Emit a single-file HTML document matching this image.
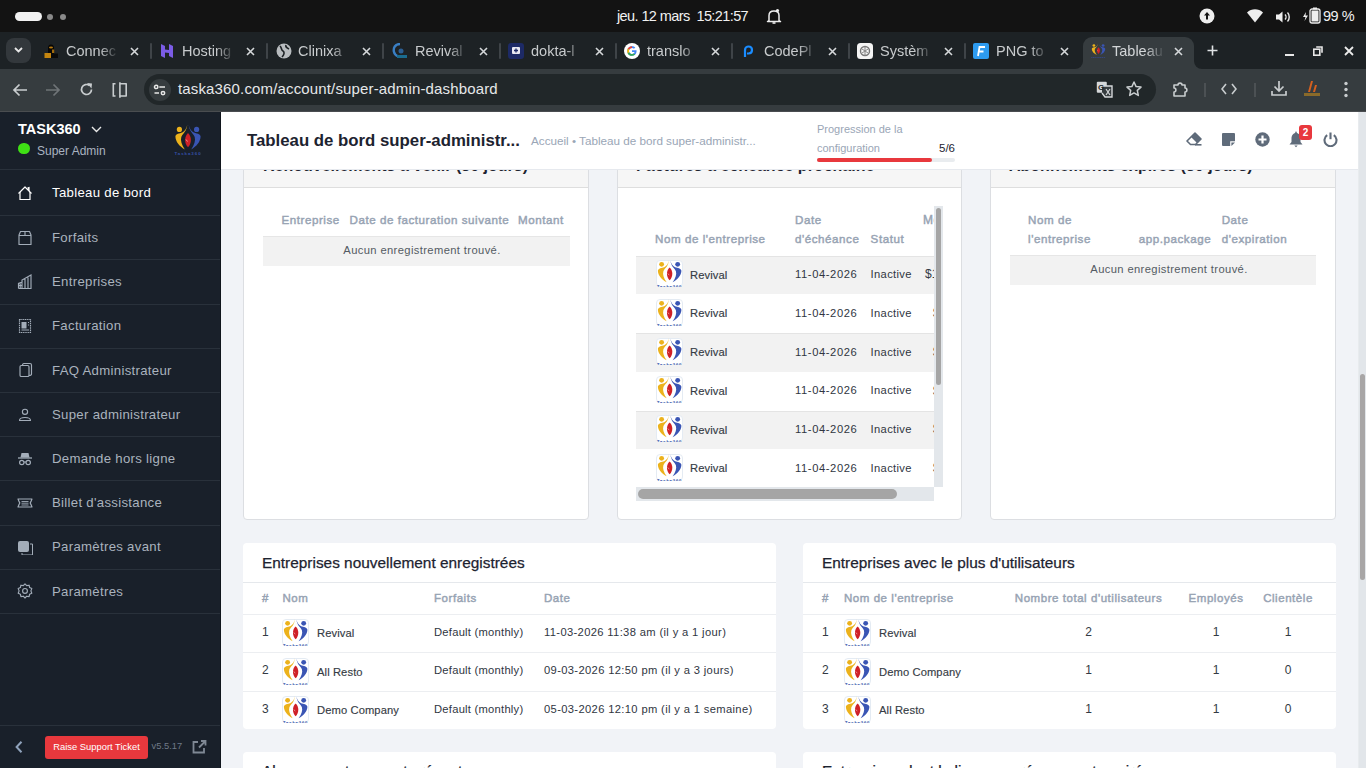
<!DOCTYPE html>
<html><head><meta charset="utf-8"><style>
*{box-sizing:border-box;margin:0;padding:0}
html,body{width:1366px;height:768px;overflow:hidden;background:#f1f3f7;font-family:"Liberation Sans",sans-serif}
.abs{position:absolute}
.nw{white-space:nowrap}
#os{position:absolute;left:0;top:0;width:1366px;height:32px;background:#131313;color:#f1f1f1}
#tabs{position:absolute;left:0;top:32px;width:1366px;height:37px;background:#1d2225}
#tool{position:absolute;left:0;top:69px;width:1366px;height:42px;background:#363c3f}
#sep{position:absolute;left:0;top:111px;width:1366px;height:1px;background:#4a4d50}
.tt{position:absolute;top:11px;font-size:14.5px;color:#c8cbcd;white-space:nowrap;overflow:hidden;width:53px;-webkit-mask-image:linear-gradient(to right,#000 34px,transparent 53px)}
.tsep{position:absolute;top:11px;width:2px;height:16px;background:#3f4448;border-radius:1px}
#side{position:absolute;left:0;top:112px;width:221px;height:656px;background:#19202a;border-right:1px solid #10151c}
.mi{position:absolute;left:0;width:220px;height:45px;border-bottom:1px solid #29313b}
.mi .tx{position:absolute;left:52px;top:15px;font-size:14px;color:#aab3be;white-space:nowrap}
.mi svg{position:absolute}
#hdr{position:absolute;left:221px;top:112px;width:1137px;height:58px;background:#fff;border-bottom:1px solid #e6e9ee}
.card{position:absolute;background:#fff;border:1px solid #dcdee2;border-radius:4px}
.card2{position:absolute;background:#fff;border-radius:4px}
.th{position:absolute;font-size:12px;font-weight:bold;color:#9aa6b6;white-space:nowrap}
.td{position:absolute;font-size:12px;color:#333a44;white-space:nowrap}
.empty{position:absolute;background:#f2f2f2;font-size:12px;color:#50565e;text-align:center;line-height:30px}
.logo{position:absolute;width:27px;height:26px;background:#fff;border:1px solid #e3e8ef;border-radius:4px;overflow:hidden}
.logo svg{position:absolute;left:1px;top:0}
#sb{position:absolute;left:1358px;top:112px;width:8px;height:656px;background:#e2e6ea;border-left:1px solid #e8ebee}
#sbt{position:absolute;left:1360px;top:374px;width:5px;height:206px;background:#a8a6a6;border-radius:2.5px}
</style></head><body>
<svg width="0" height="0" style="position:absolute"><defs>
<symbol id="lg" viewBox="0 0 36 36">
<circle cx="9.4" cy="8.4" r="2.6" fill="#ecb21c"/>
<path d="M17.4,3.8 C16.4,7.5 15,10.2 12.2,11.6 C9.6,12.6 5.8,12.6 5.4,15.6 C5.6,21 9.5,25.5 14.8,28.4 C11.6,23.5 10.3,19.5 11.3,16 C12.1,13.6 14.6,11.8 15.6,9.6 C16.4,8 17,6 17.4,3.8 Z" fill="#ecb21c"/>
<circle cx="26.6" cy="8.4" r="2.6" fill="#3a55b4"/>
<path d="M18.6,3.8 C19.6,7.5 21,10.2 23.8,11.6 C26.4,12.6 30.2,12.6 30.6,15.6 C30.4,21 26.5,25.5 21.2,28.4 C24.4,23.5 25.7,19.5 24.7,16 C23.9,13.6 21.4,11.8 20.4,9.6 C19.6,8 19,6 18.6,3.8 Z" fill="#3a55b4"/>
<path d="M18,12 C21.8,15.5 21.8,22.5 18,26.2 C14.2,22.5 14.2,15.5 18,12 Z" fill="#cf2027"/>
<path d="M16,18.5 L17.5,20.5" stroke="#f0b0b0" stroke-width="0.8"/>
<text x="18" y="34.3" text-anchor="middle" font-family="Liberation Sans" font-weight="bold" font-size="4.4" letter-spacing="0.95" fill="#3550a8">Taska360</text>
</symbol>
</defs></svg>
<div id="os">
<div class="abs" style="left:15px;top:12px;width:27px;height:9px;border-radius:5px;background:#f2f2f2"></div>
<div class="abs" style="left:47px;top:14px;width:6px;height:6px;border-radius:3px;background:#8a8a8a"></div>
<div class="abs" style="left:60px;top:14px;width:6px;height:6px;border-radius:3px;background:#8a8a8a"></div>
<div class="abs nw" style="left:617px;top:8px;font-size:14.5px;letter-spacing:-0.6px">jeu. 12 mars&nbsp; 15:21:57</div>
<svg class="abs" style="left:766px;top:8px" width="16" height="17" viewBox="0 0 16 17"><path d="M3,12.5 L3,7.5 C3,4.5 5,3 8,3 C11,3 13,4.5 13,7.5 L13,12.5 L14.5,13.5 L1.5,13.5 Z" fill="none" stroke="#eee" stroke-width="1.5" stroke-linejoin="round"/><path d="M6.5,15 L9.5,15" stroke="#eee" stroke-width="1.6"/><circle cx="11.5" cy="2.5" r="1.6" fill="#eee"/></svg>
<svg class="abs" style="left:1199px;top:8px" width="16" height="16" viewBox="0 0 16 16"><circle cx="8" cy="8" r="7.5" fill="#eee"/><path d="M8,4 L11,7.5 L9,7.5 L9,11.5 L7,11.5 L7,7.5 L5,7.5 Z" fill="#131313"/></svg>
<svg class="abs" style="left:1247px;top:9px" width="16" height="14" viewBox="0 0 16 14"><path d="M0,3.5 C4.5,-0.8 11.5,-0.8 16,3.5 L8,13.5 Z" fill="#eee"/></svg>
<svg class="abs" style="left:1276px;top:11px" width="15" height="12" viewBox="0 0 15 12"><path d="M0,3.5 L3,3.5 L6.5,0.5 L6.5,11.5 L3,8.5 L0,8.5 Z" fill="#eee"/><path d="M9,3.5 C10.3,4.8 10.3,7.2 9,8.5" fill="none" stroke="#eee" stroke-width="1.4"/><path d="M11.5,1.5 C13.8,3.8 13.8,8.2 11.5,10.5" fill="none" stroke="#eee" stroke-width="1.4"/></svg>
<svg class="abs" style="left:1302px;top:7px" width="19" height="17" viewBox="0 0 19 17"><path d="M4,5 L1,10 L3.5,10 L2.5,14 L6,8.5 L3.5,8.5 Z" fill="#eee"/><rect x="8" y="2" width="10" height="14" rx="2" fill="none" stroke="#eee" stroke-width="1.3"/><rect x="11" y="0.5" width="4" height="2" fill="#eee"/><rect x="9.5" y="3.5" width="7" height="11" fill="#eee"/></svg>
<div class="abs nw" style="left:1323px;top:8px;font-size:14.5px;letter-spacing:-0.5px">99 %</div>
</div>
<div id="tabs">
<div class="abs" style="left:6px;top:6px;width:25px;height:25px;border-radius:8px;background:#33383c"></div>
<svg class="abs" style="left:13px;top:14px" width="11" height="8" viewBox="0 0 11 8"><path d="M2,2 L5.5,5.5 L9,2" fill="none" stroke="#e8e8e8" stroke-width="1.8"/></svg>
<div class="abs" style="left:1083px;top:5px;width:111px;height:32px;background:#363c3f;border-radius:9px 9px 0 0"></div>
<div class="abs" style="left:1075px;top:29px;width:8px;height:8px;background:#363c3f"></div><div class="abs" style="left:1067px;top:21px;width:16px;height:16px;background:#1d2225;border-radius:0 0 8px 0"></div>
<div class="abs" style="left:1194px;top:29px;width:8px;height:8px;background:#363c3f"></div><div class="abs" style="left:1194px;top:21px;width:16px;height:16px;background:#1d2225;border-radius:0 0 0 8px"></div>
<svg class="abs" style="left:43px;top:11px" width="16" height="16" viewBox="0 0 16 16"><path d="M5,11.5 L5,5 C5,2.5 6.5,1.5 8,1.5 C9.5,1.5 11,2.5 11,5 L11,11.5 Z" fill="#060606"/><ellipse cx="8" cy="4.6" rx="2" ry="1" fill="#b77a10"/><rect x="9" y="6.5" width="2.2" height="3.5" fill="#a06a0c"/><rect x="1.5" y="10" width="6.5" height="5" fill="#c4850f"/><rect x="8" y="10.5" width="7" height="4.5" fill="#0a0a0a"/></svg>
<div class="tt" style="left:66px;color:#c8cbcd">Connec</div>
<svg class="abs" style="left:130px;top:15px" width="9" height="9" viewBox="0 0 9 9"><path d="M1,1 L8,8 M8,1 L1,8" stroke="#d5d8da" stroke-width="1.6"/></svg>
<div class="tsep" style="left:150px"></div>
<svg class="abs" style="left:159px;top:11px" width="16" height="16" viewBox="0 0 16 16"><path d="M2,1 L6,3 L6,6.5 L10,7 L10,1 L14,3 L14,15 L10,13 L10,10 L6,9.5 L6,15 L2,13 Z" fill="#7b5ce6"/></svg>
<div class="tt" style="left:182px;color:#c8cbcd">Hosting</div>
<svg class="abs" style="left:246px;top:15px" width="9" height="9" viewBox="0 0 9 9"><path d="M1,1 L8,8 M8,1 L1,8" stroke="#d5d8da" stroke-width="1.6"/></svg>
<div class="tsep" style="left:266px"></div>
<svg class="abs" style="left:276px;top:11px" width="16" height="16" viewBox="0 0 16 16"><circle cx="8" cy="8" r="7.5" fill="#b8bcbf"/><path d="M4,3 C6,5 5,7 7,8 C9,9 8,12 6,14 M10,2 C9,4 11,5 13,6" fill="none" stroke="#1d2225" stroke-width="1.6"/></svg>
<div class="tt" style="left:298px;color:#c8cbcd">Clinixa</div>
<svg class="abs" style="left:362px;top:15px" width="9" height="9" viewBox="0 0 9 9"><path d="M1,1 L8,8 M8,1 L1,8" stroke="#d5d8da" stroke-width="1.6"/></svg>
<div class="tsep" style="left:382px"></div>
<svg class="abs" style="left:392px;top:11px" width="16" height="16" viewBox="0 0 16 16"><path d="M8,1 C3,1 1,5 2,9 C3,13 8,15 12,13" fill="none" stroke="#3a7fc4" stroke-width="2.4"/><circle cx="9" cy="8" r="2.5" fill="#2c5f94"/><rect x="5" y="12" width="10" height="3" fill="#1a6b8f"/></svg>
<div class="tt" style="left:415px;color:#c8cbcd">Revival</div>
<svg class="abs" style="left:479px;top:15px" width="9" height="9" viewBox="0 0 9 9"><path d="M1,1 L8,8 M8,1 L1,8" stroke="#d5d8da" stroke-width="1.6"/></svg>
<div class="tsep" style="left:499px"></div>
<svg class="abs" style="left:508px;top:11px" width="16" height="16" viewBox="0 0 16 16"><rect x="0" y="0" width="16" height="16" rx="3" fill="#1d2a66"/><rect x="4" y="4" width="8" height="7" rx="1" fill="#e8e8f2"/><path d="M8,5.5 L8,9.5 M6,7.5 L10,7.5" stroke="#1d2a66" stroke-width="1.3"/></svg>
<div class="tt" style="left:531px;color:#c8cbcd">dokta-l</div>
<svg class="abs" style="left:595px;top:15px" width="9" height="9" viewBox="0 0 9 9"><path d="M1,1 L8,8 M8,1 L1,8" stroke="#d5d8da" stroke-width="1.6"/></svg>
<div class="tsep" style="left:615px"></div>
<svg class="abs" style="left:624px;top:11px" width="16" height="16" viewBox="0 0 16 16"><circle cx="8" cy="8" r="8" fill="#fff"/><path d="M12.5,7.2 L8,7.2 L8,9 L10.6,9 C10.2,10.3 9.2,11 8,11 C6.3,11 5,9.7 5,8 C5,6.3 6.3,5 8,5 C8.8,5 9.5,5.3 10,5.8 L11.3,4.5 C10.4,3.7 9.3,3.2 8,3.2 C5.3,3.2 3.2,5.3 3.2,8 C3.2,10.7 5.3,12.8 8,12.8 C10.7,12.8 12.6,10.9 12.6,8.1 Z" fill="#4285f4"/><path d="M3.7,5.6 L5.3,6.8 C5.7,5.7 6.8,5 8,5 L8,3.2 C6.1,3.2 4.5,4.2 3.7,5.6Z" fill="#ea4335"/><path d="M3.7,10.4 L5.3,9.2 C5.1,8.8 5,8.4 5,8 C5,7.6 5.1,7.2 5.3,6.8 L3.7,5.6 C3.4,6.3 3.2,7.1 3.2,8 C3.2,8.9 3.4,9.7 3.7,10.4Z" fill="#fbbc05"/><path d="M8,12.8 C9.3,12.8 10.4,12.4 11.2,11.6 L9.7,10.4 C9.2,10.8 8.6,11 8,11 C6.8,11 5.7,10.3 5.3,9.2 L3.7,10.4 C4.5,11.8 6.1,12.8 8,12.8Z" fill="#34a853"/></svg>
<div class="tt" style="left:647px;color:#c8cbcd">translo</div>
<svg class="abs" style="left:711px;top:15px" width="9" height="9" viewBox="0 0 9 9"><path d="M1,1 L8,8 M8,1 L1,8" stroke="#d5d8da" stroke-width="1.6"/></svg>
<div class="tsep" style="left:731px"></div>
<svg class="abs" style="left:740px;top:11px" width="16" height="16" viewBox="0 0 16 16"><path d="M5,14 L5,7 C5,4.5 7,3.5 8.5,3.5 C10.5,3.5 12,5 12,7 C12,9 10.5,10.5 8.5,10.5 L7,10.5" fill="none" stroke="#1a8cff" stroke-width="2.2"/></svg>
<div class="tt" style="left:764px;color:#c8cbcd">CodePl</div>
<svg class="abs" style="left:828px;top:15px" width="9" height="9" viewBox="0 0 9 9"><path d="M1,1 L8,8 M8,1 L1,8" stroke="#d5d8da" stroke-width="1.6"/></svg>
<div class="tsep" style="left:848px"></div>
<svg class="abs" style="left:857px;top:11px" width="16" height="16" viewBox="0 0 16 16"><rect x="0" y="0" width="16" height="16" rx="3.5" fill="#f4f4f4"/><circle cx="8" cy="8" r="4.5" fill="none" stroke="#777" stroke-width="1.4"/><path d="M5,6 L11,10 M11,6 L5,10 M8,3.5 L8,12.5" stroke="#888" stroke-width="1"/></svg>
<div class="tt" style="left:880px;color:#c8cbcd">Systèm</div>
<svg class="abs" style="left:944px;top:15px" width="9" height="9" viewBox="0 0 9 9"><path d="M1,1 L8,8 M8,1 L1,8" stroke="#d5d8da" stroke-width="1.6"/></svg>
<div class="tsep" style="left:964px"></div>
<svg class="abs" style="left:973px;top:11px" width="16" height="16" viewBox="0 0 16 16"><rect x="0" y="0" width="16" height="16" rx="2" fill="#2d9bf0"/><path d="M5,13 L6.5,4 L12,4 M5.8,8.5 L10.5,8.5" fill="none" stroke="#fff" stroke-width="1.8"/></svg>
<div class="tt" style="left:996px;color:#c8cbcd">PNG to</div>
<svg class="abs" style="left:1060px;top:15px" width="9" height="9" viewBox="0 0 9 9"><path d="M1,1 L8,8 M8,1 L1,8" stroke="#d5d8da" stroke-width="1.6"/></svg>
<svg class="abs" style="left:1091px;top:11px" width="15" height="15" viewBox="4 3 28 32" preserveAspectRatio="none"><use href="#lg" width="36" height="36"/></svg>
<div class="tt" style="left:1112px;color:#d3d6d8">Tableau</div>
<svg class="abs" style="left:1174px;top:15px" width="9" height="9" viewBox="0 0 9 9"><path d="M1,1 L8,8 M8,1 L1,8" stroke="#d5d8da" stroke-width="1.6"/></svg>
<svg class="abs" style="left:1207px;top:13px" width="11" height="11" viewBox="0 0 11 11"><path d="M5.5,0.5 L5.5,10.5 M0.5,5.5 L10.5,5.5" stroke="#e0e3e5" stroke-width="1.6"/></svg>
<div class="abs" style="left:1285px;top:21.5px;width:9px;height:2px;background:#e8e8e8"></div>
<svg class="abs" style="left:1313px;top:14px" width="10" height="10" viewBox="0 0 10 10"><rect x="0.8" y="3.2" width="6" height="6" fill="none" stroke="#e8e8e8" stroke-width="1.6"/><path d="M3.2,1 L9,1 L9,6.8" fill="none" stroke="#e8e8e8" stroke-width="1.6"/></svg>
<svg class="abs" style="left:1344px;top:14px" width="10" height="10" viewBox="0 0 10 10"><path d="M1,1 L9,9 M9,1 L1,9" stroke="#ececec" stroke-width="1.8"/></svg>
</div>
<div id="tool">
<div class="abs" style="left:144px;top:5px;width:1012px;height:31px;border-radius:16px;background:#212729"></div>
<svg class="abs" style="left:12px;top:13px" width="16" height="16" viewBox="0 0 16 16"><path d="M15,8 L2,8 M7.5,2.5 L2,8 L7.5,13.5" fill="none" stroke="#c9cdcf" stroke-width="1.7"/></svg>
<svg class="abs" style="left:45px;top:13px" width="16" height="16" viewBox="0 0 16 16"><path d="M1,8 L14,8 M8.5,2.5 L14,8 L8.5,13.5" fill="none" stroke="#6f7477" stroke-width="1.7"/></svg>
<svg class="abs" style="left:79px;top:13px" width="15" height="15" viewBox="0 0 15 15"><path d="M12.5,7.5 A5,5 0 1 1 10.5,3.5" fill="none" stroke="#c9cdcf" stroke-width="1.7"/><path d="M8,1 L13,1.5 L12.5,6.5 Z" fill="#c9cdcf"/></svg>
<svg class="abs" style="left:110px;top:12px" width="20" height="18" viewBox="0 0 20 18"><path d="M5.5,2.7 L3.3,2.7 L3.3,15 L5.5,15" fill="none" stroke="#c9cdcf" stroke-width="1.6"/><path d="M9.9,1.2 L9.9,16.8" stroke="#c9cdcf" stroke-width="1.6"/><path d="M9.9,2.7 L16.2,2.7 L16.2,15 L9.9,15" fill="none" stroke="#c9cdcf" stroke-width="1.6" stroke-linejoin="round"/></svg>
<div class="abs" style="left:149px;top:10px;width:22px;height:22px;border-radius:11px;background:#363c3f"></div>
<svg class="abs" style="left:152px;top:14px" width="16" height="14" viewBox="0 0 16 14"><circle cx="4.2" cy="3.9" r="1.7" fill="none" stroke="#e8e8e8" stroke-width="1.5"/><path d="M7.3,3.9 L13,3.9 M2.5,10.1 L7,10.1" stroke="#e8e8e8" stroke-width="1.5"/><circle cx="11" cy="10.1" r="1.7" fill="none" stroke="#e8e8e8" stroke-width="1.5"/></svg>
<div class="abs nw" style="left:178px;top:11px;font-size:15px;letter-spacing:0.15px;color:#e6e8e9">taska360.com/account/super-admin-dashboard</div>
<svg class="abs" style="left:1096px;top:12px" width="17" height="17" viewBox="0 0 17 17"><rect x="0.8" y="0.8" width="10" height="11" rx="1" fill="#d5d8da"/><path d="M6,5 L12,5 L16,5 L16,16 L9,16 L6,12" fill="#363c3f" stroke="#d5d8da" stroke-width="1.4"/><text x="2" y="9" font-size="8" font-family="Liberation Sans" font-weight="bold" fill="#212729">G</text><path d="M10,8 L14,14 M14,8 L10,14" stroke="#d5d8da" stroke-width="1.2"/></svg>
<svg class="abs" style="left:1126px;top:12px" width="16" height="16" viewBox="0 0 16 16"><path d="M8,1 L10.1,5.6 L15,6.1 L11.3,9.4 L12.3,14.4 L8,11.9 L3.7,14.4 L4.7,9.4 L1,6.1 L5.9,5.6 Z" fill="none" stroke="#c9cdcf" stroke-width="1.5" stroke-linejoin="round"/></svg>
<svg class="abs" style="left:1172px;top:12px" width="17" height="17" viewBox="0 0 17 17"><path d="M2,4 L6,4 C6,1.5 10,1.5 10,4 L13,4 L13,7 C15.5,7 15.5,11 13,11 L13,15 L2,15 L2,11 C4.5,11 4.5,7 2,7 Z" fill="none" stroke="#c9cdcf" stroke-width="1.6" stroke-linejoin="round"/></svg>
<div class="abs" style="left:1204px;top:13.5px;width:2px;height:14px;background:#4c5154"></div>
<svg class="abs" style="left:1221px;top:14px" width="16" height="12" viewBox="0 0 16 12"><path d="M5,1 L1,6 L5,11 M11,1 L15,6 L11,11" fill="none" stroke="#c9cdcf" stroke-width="1.6"/></svg>
<div class="abs" style="left:1253.5px;top:13.5px;width:2px;height:14px;background:#4c5154"></div>
<svg class="abs" style="left:1271px;top:11px" width="16" height="17" viewBox="0 0 16 17"><path d="M8,1 L8,11 M3.5,6.5 L8,11 L12.5,6.5 M1,11 L1,15 L15,15 L15,11" fill="none" stroke="#c9cdcf" stroke-width="1.7"/></svg>
<svg class="abs" style="left:1303px;top:10px" width="18" height="20" viewBox="0 0 18 20"><path d="M5,13 L8,2 L10,2 L7,13 Z M10,13 L12,6 L14,6 L12,13 Z" fill="#d5601f"/><rect x="1" y="14" width="16" height="3" fill="#8a6a2a"/></svg>
<svg class="abs" style="left:1343px;top:12px" width="6" height="17" viewBox="0 0 6 17"><circle cx="3" cy="2.5" r="1.7" fill="#c9cdcf"/><circle cx="3" cy="8.5" r="1.7" fill="#c9cdcf"/><circle cx="3" cy="14.5" r="1.7" fill="#c9cdcf"/></svg>
</div>
<div id="sep"></div>
<div id="side">
<div class="abs nw" style="left:18px;top:9px;font-size:14.5px;font-weight:bold;color:#fff">TASK360</div>
<svg class="abs" style="left:91px;top:14px" width="11" height="7" viewBox="0 0 11 7"><path d="M1,1 L5.5,5.5 L10,1" fill="none" stroke="#e8e8e8" stroke-width="1.4"/></svg>
<div class="abs" style="left:18px;top:31px;width:12px;height:11px;border-radius:6px;background:#3fe015"></div>
<div class="abs nw" style="left:37px;top:32px;font-size:12px;color:#a9b3c0">Super Admin</div>
<svg class="abs" style="left:170px;top:9px" width="36" height="36"><use href="#lg" width="36" height="36"/></svg>
<div class="abs" style="left:0;top:57px;width:220px;height:1px;background:#29313b"></div>
<div class="abs" style="left:0;top:103.1px;width:220px;height:1px;background:#29313b"></div>
<svg class="abs" style="left:17px;top:72.5px" width="16" height="16" viewBox="0 0 16 16"><path d="M1.5,8.5 L8,2 L14.5,8.5" fill="none" stroke="#fff" stroke-width="1.2" stroke-linejoin="round"/><path d="M3,7 L3,14.5 L13,14.5 L13,7" fill="none" stroke="#fff" stroke-width="1.2"/><path d="M10.5,3 L12,2.5 L12,6" fill="#fff" stroke="#fff" stroke-width="1.2"/></svg>
<div class="abs nw" style="left:52px;top:72.8px;font-size:13.2px;letter-spacing:0.3px;color:#ffffff">Tableau de bord</div>
<div class="abs" style="left:0;top:147.3px;width:220px;height:1px;background:#29313b"></div>
<svg class="abs" style="left:17px;top:117.7px" width="16" height="16" viewBox="0 0 16 16"><path d="M2,14.5 L2,5 L3.5,1.5 L12.5,1.5 L14,5 L14,14.5 Z M2,5.5 L14,5.5 M8,1.5 L8,5.5" fill="none" stroke="#a3adb9" stroke-width="1.15" stroke-linejoin="round"/></svg>
<div class="abs nw" style="left:52px;top:118.0px;font-size:13.2px;letter-spacing:0.3px;color:#aab3be">Forfaits</div>
<div class="abs" style="left:0;top:191.5px;width:220px;height:1px;background:#29313b"></div>
<svg class="abs" style="left:17px;top:161.9px" width="16" height="16" viewBox="0 0 16 16"><path d="M1.5,14.5 L1.5,9.5 L5,8 L5,14.5 M5,14.5 L5,6 L14,1 L14,14.5 Z M1.5,14.5 L14,14.5 M8,5 L8,14.5 M11,3.5 L11,14.5 M1.5,11.5 L5,11.5 M3.2,9.5 L3.2,14.5" fill="none" stroke="#a3adb9" stroke-width="1.15"/></svg>
<div class="abs nw" style="left:52px;top:162.2px;font-size:13.2px;letter-spacing:0.3px;color:#aab3be">Entreprises</div>
<div class="abs" style="left:0;top:235.7px;width:220px;height:1px;background:#29313b"></div>
<svg class="abs" style="left:17px;top:206.1px" width="16" height="16" viewBox="0 0 16 16"><path d="M2.5,1.5 L13.5,1.5 L13.5,14.5 L2.5,14.5 Z" fill="none" stroke="#a3adb9" stroke-width="1.15" stroke-dasharray="1.2,0.6"/><rect x="4.5" y="4" width="5" height="6.5" fill="#a3adb9"/><path d="M11,4.5 L12,4.5 M11,7 L12,7 M4.5,12 L12,12" stroke="#a3adb9" stroke-width="1"/></svg>
<div class="abs nw" style="left:52px;top:206.4px;font-size:13.2px;letter-spacing:0.3px;color:#aab3be">Facturation</div>
<div class="abs" style="left:0;top:279.9px;width:220px;height:1px;background:#29313b"></div>
<svg class="abs" style="left:17px;top:250.3px" width="16" height="16" viewBox="0 0 16 16"><rect x="3" y="3.5" width="9" height="11" rx="1.3" fill="none" stroke="#a3adb9" stroke-width="1.15"/><path d="M5.5,3.5 C5.5,2.5 6,1.5 7,1.5 L13,1.5 C14,1.5 14.5,2 14.5,3 L14.5,12 C14.5,13 14,13.5 12,13.5" fill="none" stroke="#a3adb9" stroke-width="1.15"/></svg>
<div class="abs nw" style="left:52px;top:250.6px;font-size:13.2px;letter-spacing:0.3px;color:#aab3be">FAQ Administrateur</div>
<div class="abs" style="left:0;top:324.1px;width:220px;height:1px;background:#29313b"></div>
<svg class="abs" style="left:17px;top:294.5px" width="16" height="16" viewBox="0 0 16 16"><circle cx="8" cy="4.8" r="2.6" fill="none" stroke="#a3adb9" stroke-width="1.15"/><path d="M2.5,13.5 C2.5,9.5 13.5,9.5 13.5,13.5 Z" fill="none" stroke="#a3adb9" stroke-width="1.15" stroke-linejoin="round"/></svg>
<div class="abs nw" style="left:52px;top:294.8px;font-size:13.2px;letter-spacing:0.3px;color:#aab3be">Super administrateur</div>
<div class="abs" style="left:0;top:368.3px;width:220px;height:1px;background:#29313b"></div>
<svg class="abs" style="left:17px;top:338.7px" width="16" height="16" viewBox="0 0 16 16"><path d="M3.5,6.5 L4.5,2 L11.5,2 L12.5,6.5 Z" fill="#a3adb9"/><path d="M1,7 L15,7" stroke="#a3adb9" stroke-width="1.3"/><circle cx="4.8" cy="11.5" r="2.2" fill="none" stroke="#a3adb9" stroke-width="1.2"/><circle cx="11.2" cy="11.5" r="2.2" fill="none" stroke="#a3adb9" stroke-width="1.2"/><path d="M7,11 L9,11" stroke="#a3adb9" stroke-width="1"/></svg>
<div class="abs nw" style="left:52px;top:339.0px;font-size:13.2px;letter-spacing:0.3px;color:#aab3be">Demande hors ligne</div>
<div class="abs" style="left:0;top:412.5px;width:220px;height:1px;background:#29313b"></div>
<svg class="abs" style="left:17px;top:382.9px" width="16" height="16" viewBox="0 0 16 16"><path d="M1,4 L15,4 L14,6.5 C13,7.5 13,8.5 14,9.5 L15,12 L1,12 L2,9.5 C3,8.5 3,7.5 2,6.5 Z" fill="none" stroke="#a3adb9" stroke-width="1.15" stroke-linejoin="round"/><path d="M4.5,6.5 L11.5,6.5 M4.5,8.2 L11.5,8.2 M4.5,10 L11.5,10" stroke="#a3adb9" stroke-width="0.9"/></svg>
<div class="abs nw" style="left:52px;top:383.2px;font-size:13.2px;letter-spacing:0.3px;color:#aab3be">Billet d'assistance</div>
<div class="abs" style="left:0;top:456.7px;width:220px;height:1px;background:#29313b"></div>
<svg class="abs" style="left:17px;top:427.1px" width="16" height="16" viewBox="0 0 16 16"><rect x="1" y="2" width="11" height="11" rx="2" fill="#a3adb9"/><path d="M13,5 L15.5,5 L15.5,16 L5,16 L5,14" fill="none" stroke="#a3adb9" stroke-width="1"/></svg>
<div class="abs nw" style="left:52px;top:427.4px;font-size:13.2px;letter-spacing:0.3px;color:#aab3be">Paramètres avant</div>
<div class="abs" style="left:0;top:500.9px;width:220px;height:1px;background:#29313b"></div>
<svg class="abs" style="left:17px;top:471.3px" width="16" height="16" viewBox="0 0 16 16"><path d="M8,0.8 L9.7,2.6 L12.1,2.2 L12.6,4.6 L14.8,5.6 L13.9,7.9 L14.8,10.2 L12.6,11.2 L12.1,13.6 L9.7,13.2 L8,15 L6.3,13.2 L3.9,13.6 L3.4,11.2 L1.2,10.2 L2.1,7.9 L1.2,5.6 L3.4,4.6 L3.9,2.2 L6.3,2.6 Z" fill="none" stroke="#a3adb9" stroke-width="1.15" stroke-linejoin="round"/><circle cx="8" cy="7.9" r="2.4" fill="none" stroke="#a3adb9" stroke-width="1.15"/></svg>
<div class="abs nw" style="left:52px;top:471.6px;font-size:13.2px;letter-spacing:0.3px;color:#aab3be">Paramètres</div>
<div class="abs" style="left:0;top:613px;width:220px;height:1px;background:#29313b"></div>
<svg class="abs" style="left:14px;top:628px" width="10" height="14" viewBox="0 0 10 14"><path d="M7.5,1.8 L2.6,7 L7.5,12.2" fill="none" stroke="#8fa2bb" stroke-width="2"/></svg>
<div class="abs nw" style="left:45px;top:623.5px;width:103px;height:23px;background:#e8383d;border-radius:3px;color:#fff;font-size:9.4px;line-height:21.5px;text-align:center">Raise Support Ticket</div>
<div class="abs nw" style="left:151.5px;top:628.3px;font-size:9.4px;color:#6f7a87">v5.5.17</div>
<svg class="abs" style="left:192px;top:628px" width="15" height="14" viewBox="0 0 15 14"><path d="M6,2 L1.5,2 L1.5,12.5 L12,12.5 L12,8" fill="none" stroke="#7f8894" stroke-width="1.8"/><path d="M7,7.5 L13.5,1 M9,1 L13.5,1 L13.5,5.5" fill="none" stroke="#7f8894" stroke-width="1.8"/></svg>
</div>
<div id="content">
<div class="abs" style="left:243px;top:130px;width:346px;height:390px;background:#fff;border:1px solid #dcdee2;border-radius:4px;overflow:hidden">
<div class="abs" style="left:0;top:0;width:346px;height:57px;background:#f6f6f6;border-bottom:1px solid #dedede"></div>
</div>
<div class="abs nw" style="left:263.0px;top:157.3px;font-size:16px;font-weight:bold;color:#1d2330;">Renouvellements à venir (30 jours)</div>
<div class="abs nw" style="left:281.5px;top:213.0px;font-size:11.6px;color:#97a3b3;-webkit-text-stroke:0.45px #97a3b3;letter-spacing:0.55px;">Entreprise</div>
<div class="abs nw" style="left:349.5px;top:213.0px;font-size:11.6px;color:#97a3b3;-webkit-text-stroke:0.45px #97a3b3;letter-spacing:0.55px;">Date de facturation suivante</div>
<div class="abs nw" style="left:518.0px;top:213.0px;font-size:11.6px;color:#97a3b3;-webkit-text-stroke:0.45px #97a3b3;letter-spacing:0.55px;">Montant</div>
<div class="abs" style="left:263px;top:236px;width:307px;height:30px;background:#f2f2f2;border-top:1px solid #e6e6e6"></div>
<div class="abs nw" style="left:422.0px;width:200px;margin-left:-100px;text-align:center;top:243.7px;font-size:11.2px;color:#545b63;letter-spacing:0.38px">Aucun enregistrement trouvé.</div>
<div class="abs" style="left:617px;top:130px;width:345px;height:390px;background:#fff;border:1px solid #dcdee2;border-radius:4px;overflow:hidden">
<div class="abs" style="left:0;top:0;width:345px;height:57px;background:#f6f6f6;border-bottom:1px solid #dedede"></div>
</div>
<div class="abs nw" style="left:636.0px;top:157.3px;font-size:16px;font-weight:bold;color:#1d2330;">Factures à échéance prochaine</div>
<div class="abs" style="left:636px;top:206px;width:298px;height:281px;overflow:hidden">
</div>
<div class="abs nw" style="left:655.0px;top:231.6px;font-size:11.6px;color:#97a3b3;-webkit-text-stroke:0.45px #97a3b3;letter-spacing:0.55px;">Nom de l'entreprise</div>
<div class="abs nw" style="left:795.0px;top:213.3px;font-size:11.6px;color:#97a3b3;-webkit-text-stroke:0.45px #97a3b3;letter-spacing:0.55px;">Date</div>
<div class="abs nw" style="left:795.0px;top:231.6px;font-size:11.6px;color:#97a3b3;-webkit-text-stroke:0.45px #97a3b3;letter-spacing:0.55px;">d'échéance</div>
<div class="abs nw" style="left:870.6px;top:231.6px;font-size:11.6px;color:#97a3b3;-webkit-text-stroke:0.45px #97a3b3;letter-spacing:0.55px;">Statut</div>
<div class="abs" style="left:923px;top:206px;width:11px;height:30px;overflow:hidden"><div class="abs nw" style="left:0.0px;top:6.9px;font-size:12.0px;color:#97a3b3;-webkit-text-stroke:0.45px #97a3b3;letter-spacing:0.55px;">Montant</div></div>
<div class="abs" style="left:636px;top:255.5px;width:298px;height:38.75px;background:#f2f2f2;border-top:1px solid #e4e4e4"></div>
<div class="abs" style="left:655.5px;top:260.0px;width:27px;height:27px;background:#fff;border:1px solid #e4ebf3;border-radius:4px"></div><svg class="abs" style="left:655.5px;top:260.0px" width="27" height="27" viewBox="3.4 3.6 28.9 30" preserveAspectRatio="none"><use href="#lg" width="36" height="36"/></svg>
<div class="abs nw" style="left:690.0px;top:268.7px;font-size:11.2px;color:#363c45;letter-spacing:0.1px;-webkit-text-stroke:0.15px #363c45">Revival</div>
<div class="abs nw" style="left:795.0px;top:268.2px;font-size:11.2px;color:#30363f;letter-spacing:0.6px">11-04-2026</div>
<div class="abs nw" style="left:870.6px;top:268.2px;font-size:11.2px;color:#30363f;letter-spacing:0.34px">Inactive</div>
<div class="abs" style="left:923px;top:260.5px;width:11px;height:30px;overflow:hidden"><div class="abs nw" style="left:2.0px;top:6.9px;font-size:12px;color:#333a44;">$1</div></div>
<div class="abs" style="left:636px;top:294.2px;width:298px;height:38.75px;background:#ffffff;border-top:1px solid #ffffff"></div>
<div class="abs" style="left:655.5px;top:298.8px;width:27px;height:27px;background:#fff;border:1px solid #e4ebf3;border-radius:4px"></div><svg class="abs" style="left:655.5px;top:298.8px" width="27" height="27" viewBox="3.4 3.6 28.9 30" preserveAspectRatio="none"><use href="#lg" width="36" height="36"/></svg>
<div class="abs nw" style="left:690.0px;top:307.4px;font-size:11.2px;color:#363c45;letter-spacing:0.1px;-webkit-text-stroke:0.15px #363c45">Revival</div>
<div class="abs nw" style="left:795.0px;top:306.9px;font-size:11.2px;color:#30363f;letter-spacing:0.6px">11-04-2026</div>
<div class="abs nw" style="left:870.6px;top:306.9px;font-size:11.2px;color:#30363f;letter-spacing:0.34px">Inactive</div>
<div class="abs" style="left:923px;top:299.2px;width:11px;height:30px;overflow:hidden"><div class="abs nw" style="left:10.0px;top:6.9px;font-size:12px;color:#333a44;">$1</div></div>
<div class="abs" style="left:636px;top:333.0px;width:298px;height:38.75px;background:#f2f2f2;border-top:1px solid #e4e4e4"></div>
<div class="abs" style="left:655.5px;top:337.5px;width:27px;height:27px;background:#fff;border:1px solid #e4ebf3;border-radius:4px"></div><svg class="abs" style="left:655.5px;top:337.5px" width="27" height="27" viewBox="3.4 3.6 28.9 30" preserveAspectRatio="none"><use href="#lg" width="36" height="36"/></svg>
<div class="abs nw" style="left:690.0px;top:346.2px;font-size:11.2px;color:#363c45;letter-spacing:0.1px;-webkit-text-stroke:0.15px #363c45">Revival</div>
<div class="abs nw" style="left:795.0px;top:345.7px;font-size:11.2px;color:#30363f;letter-spacing:0.6px">11-04-2026</div>
<div class="abs nw" style="left:870.6px;top:345.7px;font-size:11.2px;color:#30363f;letter-spacing:0.34px">Inactive</div>
<div class="abs" style="left:923px;top:338.0px;width:11px;height:30px;overflow:hidden"><div class="abs nw" style="left:10.0px;top:6.9px;font-size:12px;color:#333a44;">$1</div></div>
<div class="abs" style="left:636px;top:371.8px;width:298px;height:38.75px;background:#ffffff;border-top:1px solid #ffffff"></div>
<div class="abs" style="left:655.5px;top:376.2px;width:27px;height:27px;background:#fff;border:1px solid #e4ebf3;border-radius:4px"></div><svg class="abs" style="left:655.5px;top:376.2px" width="27" height="27" viewBox="3.4 3.6 28.9 30" preserveAspectRatio="none"><use href="#lg" width="36" height="36"/></svg>
<div class="abs nw" style="left:690.0px;top:384.9px;font-size:11.2px;color:#363c45;letter-spacing:0.1px;-webkit-text-stroke:0.15px #363c45">Revival</div>
<div class="abs nw" style="left:795.0px;top:384.4px;font-size:11.2px;color:#30363f;letter-spacing:0.6px">11-04-2026</div>
<div class="abs nw" style="left:870.6px;top:384.4px;font-size:11.2px;color:#30363f;letter-spacing:0.34px">Inactive</div>
<div class="abs" style="left:923px;top:376.8px;width:11px;height:30px;overflow:hidden"><div class="abs nw" style="left:10.0px;top:6.9px;font-size:12px;color:#333a44;">$1</div></div>
<div class="abs" style="left:636px;top:410.5px;width:298px;height:38.75px;background:#f2f2f2;border-top:1px solid #e4e4e4"></div>
<div class="abs" style="left:655.5px;top:415.0px;width:27px;height:27px;background:#fff;border:1px solid #e4ebf3;border-radius:4px"></div><svg class="abs" style="left:655.5px;top:415.0px" width="27" height="27" viewBox="3.4 3.6 28.9 30" preserveAspectRatio="none"><use href="#lg" width="36" height="36"/></svg>
<div class="abs nw" style="left:690.0px;top:423.7px;font-size:11.2px;color:#363c45;letter-spacing:0.1px;-webkit-text-stroke:0.15px #363c45">Revival</div>
<div class="abs nw" style="left:795.0px;top:423.2px;font-size:11.2px;color:#30363f;letter-spacing:0.6px">11-04-2026</div>
<div class="abs nw" style="left:870.6px;top:423.2px;font-size:11.2px;color:#30363f;letter-spacing:0.34px">Inactive</div>
<div class="abs" style="left:923px;top:415.5px;width:11px;height:30px;overflow:hidden"><div class="abs nw" style="left:10.0px;top:6.9px;font-size:12px;color:#333a44;">$1</div></div>
<div class="abs" style="left:636px;top:449.2px;width:298px;height:38.75px;background:#ffffff;border-top:1px solid #ffffff"></div>
<div class="abs" style="left:655.5px;top:453.8px;width:27px;height:27px;background:#fff;border:1px solid #e4ebf3;border-radius:4px"></div><svg class="abs" style="left:655.5px;top:453.8px" width="27" height="27" viewBox="3.4 3.6 28.9 30" preserveAspectRatio="none"><use href="#lg" width="36" height="36"/></svg>
<div class="abs nw" style="left:690.0px;top:462.4px;font-size:11.2px;color:#363c45;letter-spacing:0.1px;-webkit-text-stroke:0.15px #363c45">Revival</div>
<div class="abs nw" style="left:795.0px;top:461.9px;font-size:11.2px;color:#30363f;letter-spacing:0.6px">11-04-2026</div>
<div class="abs nw" style="left:870.6px;top:461.9px;font-size:11.2px;color:#30363f;letter-spacing:0.34px">Inactive</div>
<div class="abs" style="left:923px;top:454.2px;width:11px;height:30px;overflow:hidden"><div class="abs nw" style="left:10.0px;top:6.9px;font-size:12px;color:#333a44;">$1</div></div>
<div class="abs" style="left:934px;top:206px;width:9px;height:281px;background:#e3e7eb"></div>
<div class="abs" style="left:936px;top:208px;width:5px;height:177px;background:#a5a5a5;border-radius:3px"></div>
<div class="abs" style="left:636px;top:487px;width:298px;height:14px;background:#e3e7eb"></div>
<div class="abs" style="left:638px;top:489px;width:259px;height:10px;background:#a5a5a5;border-radius:5px"></div>
<div class="abs" style="left:990px;top:130px;width:346px;height:390px;background:#fff;border:1px solid #dcdee2;border-radius:4px;overflow:hidden">
<div class="abs" style="left:0;top:0;width:346px;height:57px;background:#f6f6f6;border-bottom:1px solid #dedede"></div>
</div>
<div class="abs nw" style="left:1009.0px;top:157.3px;font-size:16px;font-weight:bold;color:#1d2330;">Abonnements expirés (30 jours)</div>
<div class="abs nw" style="left:1028.0px;top:212.9px;font-size:11.6px;color:#97a3b3;-webkit-text-stroke:0.45px #97a3b3;letter-spacing:0.55px;">Nom de</div>
<div class="abs nw" style="left:1028.0px;top:231.5px;font-size:11.6px;color:#97a3b3;-webkit-text-stroke:0.45px #97a3b3;letter-spacing:0.55px;">l'entreprise</div>
<div class="abs nw" style="left:1138.7px;top:231.5px;font-size:11.6px;color:#97a3b3;-webkit-text-stroke:0.45px #97a3b3;letter-spacing:0.55px;">app.package</div>
<div class="abs nw" style="left:1221.7px;top:212.9px;font-size:11.6px;color:#97a3b3;-webkit-text-stroke:0.45px #97a3b3;letter-spacing:0.55px;">Date</div>
<div class="abs nw" style="left:1221.7px;top:231.5px;font-size:11.6px;color:#97a3b3;-webkit-text-stroke:0.45px #97a3b3;letter-spacing:0.55px;">d'expiration</div>
<div class="abs" style="left:1010px;top:255px;width:306px;height:30px;background:#f2f2f2;border-top:1px solid #e6e6e6"></div>
<div class="abs nw" style="left:1169.0px;width:200px;margin-left:-100px;text-align:center;top:262.7px;font-size:11.2px;color:#545b63;letter-spacing:0.38px">Aucun enregistrement trouvé.</div>
<div class="abs" style="left:243px;top:543px;width:533px;height:186px;background:#fff;border-radius:4px"></div>
<div class="abs nw" style="left:262.0px;top:553.8px;font-size:15.4px;color:#1d2330;-webkit-text-stroke:0.25px #1d2330">Entreprises nouvellement enregistrées</div>
<div class="abs" style="left:243px;top:582px;width:533px;height:1px;background:#e5e8ec"></div>
<div class="abs nw" style="left:262.0px;top:592.4px;font-size:11.5px;color:#97a3b3;-webkit-text-stroke:0.45px #97a3b3;letter-spacing:0.55px;">#</div>
<div class="abs nw" style="left:282.5px;top:592.4px;font-size:11.5px;color:#97a3b3;-webkit-text-stroke:0.45px #97a3b3;letter-spacing:0.55px;">Nom</div>
<div class="abs nw" style="left:434.0px;top:592.4px;font-size:11.5px;color:#97a3b3;-webkit-text-stroke:0.45px #97a3b3;letter-spacing:0.55px;">Forfaits</div>
<div class="abs nw" style="left:544.0px;top:592.4px;font-size:11.5px;color:#97a3b3;-webkit-text-stroke:0.45px #97a3b3;letter-spacing:0.55px;">Date</div>
<div class="abs" style="left:243px;top:613.5px;width:533px;height:1px;background:#eceef1"></div>
<div class="abs nw" style="left:262.0px;top:624.7px;font-size:12px;color:#333a44;">1</div>
<div class="abs" style="left:282.0px;top:619.0px;width:27px;height:27px;background:#fff;border:1px solid #e4ebf3;border-radius:4px"></div><svg class="abs" style="left:282.0px;top:619.0px" width="27" height="27" viewBox="3.4 3.6 28.9 30" preserveAspectRatio="none"><use href="#lg" width="36" height="36"/></svg>
<div class="abs nw" style="left:317.0px;top:627.0px;font-size:11.2px;color:#363c45;letter-spacing:0.1px;-webkit-text-stroke:0.15px #363c45">Revival</div>
<div class="abs nw" style="left:434.0px;top:625.5px;font-size:11.2px;color:#30363f;letter-spacing:0.25px">Default (monthly)</div>
<div class="abs nw" style="left:544.0px;top:625.5px;font-size:11.2px;color:#30363f;letter-spacing:0.35px">11-03-2026 11:38 am (il y a 1 jour)</div>
<div class="abs" style="left:243px;top:652.2px;width:533px;height:1px;background:#eceef1"></div>
<div class="abs nw" style="left:262.0px;top:663.4px;font-size:12px;color:#333a44;">2</div>
<div class="abs" style="left:282.0px;top:657.7px;width:27px;height:27px;background:#fff;border:1px solid #e4ebf3;border-radius:4px"></div><svg class="abs" style="left:282.0px;top:657.7px" width="27" height="27" viewBox="3.4 3.6 28.9 30" preserveAspectRatio="none"><use href="#lg" width="36" height="36"/></svg>
<div class="abs nw" style="left:317.0px;top:665.7px;font-size:11.2px;color:#363c45;letter-spacing:0.1px;-webkit-text-stroke:0.15px #363c45">All Resto</div>
<div class="abs nw" style="left:434.0px;top:664.2px;font-size:11.2px;color:#30363f;letter-spacing:0.25px">Default (monthly)</div>
<div class="abs nw" style="left:544.0px;top:664.2px;font-size:11.2px;color:#30363f;letter-spacing:0.35px">09-03-2026 12:50 pm (il y a 3 jours)</div>
<div class="abs" style="left:243px;top:690.9px;width:533px;height:1px;background:#eceef1"></div>
<div class="abs nw" style="left:262.0px;top:702.1px;font-size:12px;color:#333a44;">3</div>
<div class="abs" style="left:282.0px;top:696.4px;width:27px;height:27px;background:#fff;border:1px solid #e4ebf3;border-radius:4px"></div><svg class="abs" style="left:282.0px;top:696.4px" width="27" height="27" viewBox="3.4 3.6 28.9 30" preserveAspectRatio="none"><use href="#lg" width="36" height="36"/></svg>
<div class="abs nw" style="left:317.0px;top:704.4px;font-size:11.2px;color:#363c45;letter-spacing:0.1px;-webkit-text-stroke:0.15px #363c45">Demo Company</div>
<div class="abs nw" style="left:434.0px;top:702.9px;font-size:11.2px;color:#30363f;letter-spacing:0.25px">Default (monthly)</div>
<div class="abs nw" style="left:544.0px;top:702.9px;font-size:11.2px;color:#30363f;letter-spacing:0.35px">05-03-2026 12:10 pm (il y a 1 semaine)</div>
<div class="abs" style="left:803px;top:543px;width:533px;height:186px;background:#fff;border-radius:4px"></div>
<div class="abs nw" style="left:822.0px;top:553.8px;font-size:15.4px;color:#1d2330;-webkit-text-stroke:0.25px #1d2330">Entreprises avec le plus d'utilisateurs</div>
<div class="abs" style="left:803px;top:582px;width:533px;height:1px;background:#e5e8ec"></div>
<div class="abs nw" style="left:822.0px;top:592.4px;font-size:11.5px;color:#97a3b3;-webkit-text-stroke:0.45px #97a3b3;letter-spacing:0.55px;">#</div>
<div class="abs nw" style="left:844.0px;top:592.4px;font-size:11.5px;color:#97a3b3;-webkit-text-stroke:0.45px #97a3b3;letter-spacing:0.55px;">Nom de l'entreprise</div>
<div class="abs nw" style="left:1088.5px;width:200px;margin-left:-100px;text-align:center;top:592.4px;font-size:11.5px;color:#97a3b3;-webkit-text-stroke:0.45px #97a3b3;letter-spacing:0.55px;">Nombre total d'utilisateurs</div>
<div class="abs nw" style="left:1216.0px;width:200px;margin-left:-100px;text-align:center;top:592.4px;font-size:11.5px;color:#97a3b3;-webkit-text-stroke:0.45px #97a3b3;letter-spacing:0.55px;">Employés</div>
<div class="abs nw" style="left:1288.0px;width:200px;margin-left:-100px;text-align:center;top:592.4px;font-size:11.5px;color:#97a3b3;-webkit-text-stroke:0.45px #97a3b3;letter-spacing:0.55px;">Clientèle</div>
<div class="abs" style="left:803px;top:613.5px;width:533px;height:1px;background:#eceef1"></div>
<div class="abs nw" style="left:822.0px;top:624.7px;font-size:12px;color:#333a44;">1</div>
<div class="abs" style="left:844.0px;top:619.0px;width:27px;height:27px;background:#fff;border:1px solid #e4ebf3;border-radius:4px"></div><svg class="abs" style="left:844.0px;top:619.0px" width="27" height="27" viewBox="3.4 3.6 28.9 30" preserveAspectRatio="none"><use href="#lg" width="36" height="36"/></svg>
<div class="abs nw" style="left:879.0px;top:627.0px;font-size:11.2px;color:#363c45;letter-spacing:0.1px;-webkit-text-stroke:0.15px #363c45">Revival</div>
<div class="abs nw" style="left:1088.5px;width:200px;margin-left:-100px;text-align:center;top:624.7px;font-size:12px;color:#333a44;">2</div>
<div class="abs nw" style="left:1216.0px;width:200px;margin-left:-100px;text-align:center;top:624.7px;font-size:12px;color:#333a44;">1</div>
<div class="abs nw" style="left:1288.0px;width:200px;margin-left:-100px;text-align:center;top:624.7px;font-size:12px;color:#333a44;">1</div>
<div class="abs" style="left:803px;top:652.2px;width:533px;height:1px;background:#eceef1"></div>
<div class="abs nw" style="left:822.0px;top:663.4px;font-size:12px;color:#333a44;">2</div>
<div class="abs" style="left:844.0px;top:657.7px;width:27px;height:27px;background:#fff;border:1px solid #e4ebf3;border-radius:4px"></div><svg class="abs" style="left:844.0px;top:657.7px" width="27" height="27" viewBox="3.4 3.6 28.9 30" preserveAspectRatio="none"><use href="#lg" width="36" height="36"/></svg>
<div class="abs nw" style="left:879.0px;top:665.7px;font-size:11.2px;color:#363c45;letter-spacing:0.1px;-webkit-text-stroke:0.15px #363c45">Demo Company</div>
<div class="abs nw" style="left:1088.5px;width:200px;margin-left:-100px;text-align:center;top:663.4px;font-size:12px;color:#333a44;">1</div>
<div class="abs nw" style="left:1216.0px;width:200px;margin-left:-100px;text-align:center;top:663.4px;font-size:12px;color:#333a44;">1</div>
<div class="abs nw" style="left:1288.0px;width:200px;margin-left:-100px;text-align:center;top:663.4px;font-size:12px;color:#333a44;">0</div>
<div class="abs" style="left:803px;top:690.9px;width:533px;height:1px;background:#eceef1"></div>
<div class="abs nw" style="left:822.0px;top:702.1px;font-size:12px;color:#333a44;">3</div>
<div class="abs" style="left:844.0px;top:696.4px;width:27px;height:27px;background:#fff;border:1px solid #e4ebf3;border-radius:4px"></div><svg class="abs" style="left:844.0px;top:696.4px" width="27" height="27" viewBox="3.4 3.6 28.9 30" preserveAspectRatio="none"><use href="#lg" width="36" height="36"/></svg>
<div class="abs nw" style="left:879.0px;top:704.4px;font-size:11.2px;color:#363c45;letter-spacing:0.1px;-webkit-text-stroke:0.15px #363c45">All Resto</div>
<div class="abs nw" style="left:1088.5px;width:200px;margin-left:-100px;text-align:center;top:702.1px;font-size:12px;color:#333a44;">1</div>
<div class="abs nw" style="left:1216.0px;width:200px;margin-left:-100px;text-align:center;top:702.1px;font-size:12px;color:#333a44;">1</div>
<div class="abs nw" style="left:1288.0px;width:200px;margin-left:-100px;text-align:center;top:702.1px;font-size:12px;color:#333a44;">0</div>
<div class="abs" style="left:243px;top:752px;width:533px;height:40px;background:#fff;border-radius:4px"></div>
<div class="abs nw" style="left:262.0px;top:761.8px;font-size:15.4px;color:#1d2330;-webkit-text-stroke:0.25px #1d2330">Abonnements payants récents</div>
<div class="abs" style="left:803px;top:752px;width:533px;height:40px;background:#fff;border-radius:4px"></div>
<div class="abs nw" style="left:822.0px;top:761.8px;font-size:15.4px;color:#1d2330;-webkit-text-stroke:0.25px #1d2330">Entreprises dont la licence a récemment expiré</div>
</div>
<div id="hdr">
<div class="abs nw" style="left:26px;top:18.5px;font-size:16.8px;font-weight:bold;color:#1d2330">Tableau de bord super-administr...</div>
<div class="abs nw" style="left:310px;top:21.5px;font-size:11.7px;color:#9aa6b6">Accueil • Tableau de bord super-administr...</div>
<div class="abs nw" style="left:596px;top:11px;font-size:11px;color:#9aa6b6">Progression de la</div>
<div class="abs nw" style="left:596px;top:30px;font-size:11px;color:#9aa6b6">configuration</div>
<div class="abs nw" style="left:718px;top:30px;font-size:11.5px;color:#1d2330">5/6</div>
<div class="abs" style="left:596px;top:46px;width:138px;height:4px;border-radius:2px;background:#e9ecef"></div>
<div class="abs" style="left:596px;top:46px;width:115px;height:4px;border-radius:2px;background:#e8383d"></div>
<svg class="abs" style="left:965px;top:20px" width="16" height="14" viewBox="0 0 16 14"><path d="M9,1 L15,7 L9.5,12.5 L4.5,12.5 L1,9 Z" fill="none" stroke="#5f6b7a" stroke-width="1.6" stroke-linejoin="round"/><path d="M9,1 L15,7 L11,11 L5,5 Z" fill="#5f6b7a"/><path d="M9,12.8 L15.5,12.8" stroke="#5f6b7a" stroke-width="1.6"/></svg>
<svg class="abs" style="left:1001px;top:21px" width="13" height="13" viewBox="0 0 13 13"><path d="M1,0 L12,0 Q13,0 13,1 L13,8.2 L8.2,8.2 L8.2,13 L1,13 Q0,13 0,12 L0,1 Q0,0 1,0 Z" fill="#5f6b7a"/><path d="M9.4,9.4 L13,9.4 L9.4,13 Z" fill="#5f6b7a"/></svg>
<svg class="abs" style="left:1034px;top:20px" width="15" height="15" viewBox="0 0 15 15"><circle cx="7.5" cy="7.5" r="7.2" fill="#5f6b7a"/><path d="M7.5,3.5 L7.5,11.5 M3.5,7.5 L11.5,7.5" stroke="#fff" stroke-width="2.2"/></svg>
<svg class="abs" style="left:1068px;top:19px" width="14" height="18" viewBox="0 0 14 18"><path d="M7,2 C10,2 11.5,4.5 11.5,7.5 L11.5,11 L13.5,13.5 L0.5,13.5 L2.5,11 L2.5,7.5 C2.5,4.5 4,2 7,2 Z" fill="#5f6b7a"/><rect x="6.2" y="0.6" width="1.6" height="2.5" rx="0.8" fill="#5f6b7a"/><path d="M5.3,14.5 L8.7,14.5 L7,16.2 Z" fill="#5f6b7a"/></svg>
<div class="abs" style="left:1078px;top:13px;width:13px;height:15px;background:#e8383d;border-radius:3px;color:#fff;font-size:10px;font-weight:bold;text-align:center;line-height:15px">2</div>
<svg class="abs" style="left:1102px;top:20px" width="15" height="15" viewBox="0 0 15 15"><path d="M4.2,3.2 A6,6 0 1 0 10.8,3.2" fill="none" stroke="#5f6b7a" stroke-width="2.1"/><path d="M7.5,0.5 L7.5,7.2" stroke="#5f6b7a" stroke-width="2.1"/></svg>
</div>
<div id="sb"></div><div id="sbt"></div>
</body></html>
